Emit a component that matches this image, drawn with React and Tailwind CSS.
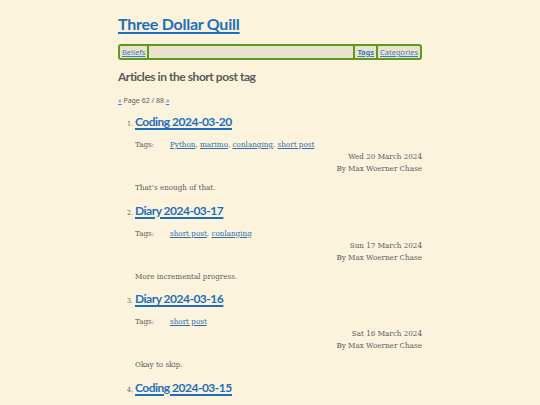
import React from "react";

const sans = { fontFamily: 'Lato, "Noto Sans", sans-serif' };
const serif = { fontFamily: '"DejaVu Serif Condensed", "DejaVu Serif", serif' };

const posts = [
  { title: "Coding 2024-03-20", tags: ["Python", "marimo", "conlanging", "short post"], date: "Wed 20 March 2024", summary: "That\u2019s enough of that." },
  { title: "Diary 2024-03-17", tags: ["short post", "conlanging"], date: "Sun 17 March 2024", summary: "More incremental progress." },
  { title: "Diary 2024-03-16", tags: ["short post"], date: "Sat 16 March 2024", summary: "Okay to skip." },
  { title: "Coding 2024-03-15", tags: ["short post"], date: "Fri 15 March 2024", summary: "Placeholder." },
];

export default function App() {
  return (
    <div className="h-[405px] w-full overflow-hidden bg-[#fbf3dc] text-[#555555]">
      <div className="mx-auto w-[304px] pt-[12px]">
        <h1 style={sans} className="text-[16px] font-bold leading-[24px] tracking-[-0.25px] text-[#1d6fbd] underline decoration-[1.5px] underline-offset-2">
          <a href="#">Three Dollar Quill</a>
        </h1>
        <nav style={{ fontFamily: '"Noto Sans", sans-serif' }} className="mt-[8px] flex h-[16px] items-stretch rounded-[3px] border-2 border-[#5f9a1d] bg-[#e9e2cc] text-[7.5px] leading-[12px]">
          <a href="#" className="border-r-2 border-[#5f9a1d] px-[2px] text-[#3f7fbf] underline">Beliefs</a>
          <div className="flex-1" />
          <a href="#" className="border-l-2 border-[#5f9a1d] px-[2px] font-bold text-[#3f7fbf] underline">Tags</a>
          <a href="#" className="border-l-2 border-[#5f9a1d] px-[2px] text-[#3f7fbf] underline">Categories</a>
        </nav>
        <h2 style={sans} className="mt-[8px] text-[12px] font-bold leading-[18px] tracking-[-0.45px] text-[#5a5a5a]">
          Articles in the short post tag
        </h2>
        <p style={{ fontFamily: '"Noto Sans", sans-serif' }} className="mt-[10px] text-[7px] leading-[10px] text-[#5e5e5e]">
          <a href="#" className="text-[#3f7fbf] underline">«</a> Page 62 / 88{" "}
          <a href="#" className="text-[#3f7fbf] underline">»</a>
        </p>
        <ol className="mt-[5px] list-decimal pl-[17px]">
          {posts.map((p) => (
            <li key={p.title} style={serif} className="mb-[5.5px] text-[8px] marker:text-[7px] marker:text-[#5e5e5e]">
              <h3 style={sans} className="inline text-[12px] font-bold leading-[22px] tracking-[-0.5px] text-[#1d6fbd] underline decoration-[1.5px] underline-offset-2">
                <a href="#">{p.title}</a>
              </h3>
              <div className="mt-[6px] flex leading-[12px] text-[#5e5e5e]">
                <span className="w-[35px]">Tags:</span>
                <span>
                  {p.tags.map((t, i) => (
                    <React.Fragment key={t}>
                      <a href="#" className="text-[#2f6fb0] underline">{t}</a>
                      {i < p.tags.length - 1 ? ", " : ""}
                    </React.Fragment>
                  ))}
                </span>
              </div>
              <div className="text-right leading-[12px] text-[#5e5e5e]">
                <div>{p.date}</div>
                <div>By Max Woerner Chase</div>
              </div>
              <p className="mt-[7px] leading-[12px] text-[#5e5e5e]">{p.summary}</p>
            </li>
          ))}
        </ol>
      </div>
    </div>
  );
}
